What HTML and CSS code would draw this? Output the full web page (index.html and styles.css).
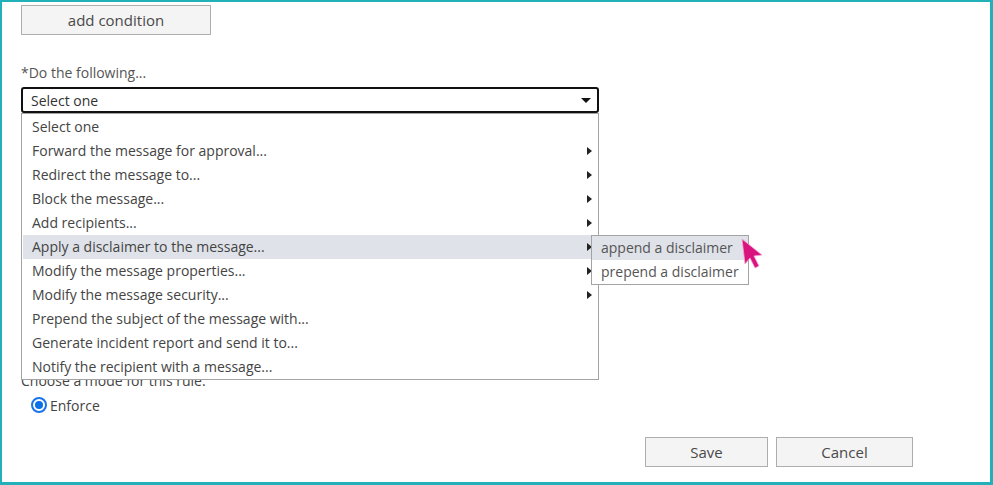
FILE: index.html
```html
<!DOCTYPE html>
<html>
<head>
<meta charset="utf-8">
<link rel="stylesheet" href="styles.css">
</head>
<body>
<div class="frame">
  <button class="btn add-btn">add condition</button>
  <div class="label">*Do the following...</div>
  <div class="select-wrap">
    <div class="select">
      <span>Select one</span>
      <span class="down"></span>
    </div>
    <ul class="list">
      <li>Select one</li>
      <li class="sub">Forward the message for approval...</li>
      <li class="sub">Redirect the message to...</li>
      <li class="sub">Block the message...</li>
      <li class="sub">Add recipients...</li>
      <li class="sub active">Apply a disclaimer to the message...
        <ul class="submenu">
          <li class="active">append a disclaimer</li>
          <li>prepend a disclaimer</li>
        </ul>
        <svg class="cursor" width="24" height="32" viewBox="0 0 24 32"><path d="M1 1 L21 17 L13 18 L18 28 L14 30 L9 20 L4 26 Z" fill="#d9147f" stroke="#f3a6cf" stroke-width="0.8"/></svg>
      </li>
      <li class="sub">Modify the message properties...</li>
      <li class="sub">Modify the message security...</li>
      <li>Prepend the subject of the message with...</li>
      <li>Generate incident report and send it to...</li>
      <li>Notify the recipient with a message...</li>
    </ul>
  </div>
  <div class="mode">Choose a mode for this rule:</div>
  <label class="radio"><span class="dot"></span>Enforce</label>
  <div class="actions">
    <button class="btn save">Save</button>
    <button class="btn cancel">Cancel</button>
  </div>
</div>
</body>
</html>
```
FILE: styles.css
```css
* { box-sizing: border-box; }
html, body { margin: 0; padding: 0; background: #fff; }
body { font-family: "Open Sans", "Liberation Sans", sans-serif; font-size: 14px; color: #444; }
.frame {
  width: 993px; height: 485px;
  border-style: solid; border-color: #22b1b9;
  border-width: 2px 3px 3px 2px;
  padding: 3px 77px 0 19px;
  position: relative;
  overflow: hidden;
}
.btn {
  font-family: inherit; font-size: 15px; color: #4a4a4a;
  background: #f4f4f4; border: 1px solid #adadad; border-radius: 0;
  padding: 0; height: 30px; display: block;
}
.add-btn { width: 190px; }
.label { margin-top: 28px; height: 20px; line-height: 20px; color: #555; }
.select-wrap { position: relative; width: 578px; margin-top: 4px; }
.select {
  height: 26px; border: 2px solid #111; border-radius: 3px;
  display: flex; align-items: center; justify-content: space-between;
  padding: 0 6px 0 8px; color: #333;
}
.down { width: 0; height: 0; border-left: 5px solid transparent; border-right: 5px solid transparent; border-top: 5px solid #111; margin-top: 1px; }
.list {
  position: absolute; left: 0; top: 100%; width: 578px;
  margin: 0; padding: 1px 0 0; list-style: none;
  border: 1px solid #a3a3a3; background: #fff; z-index: 2;
}
.list > li {
  height: 24px; line-height: 24px; padding-left: 10px; position: relative; color: #444; white-space: nowrap;
}
.list > li.sub::after {
  content: ""; position: absolute; right: 6px; top: 8px;
  border-top: 4px solid transparent; border-bottom: 4px solid transparent; border-left: 5px solid #222;
}
.list > li.active { background: #dfe2e8; margin: 0 1px; padding-left: 9px; }
.list > li.active.sub::after { right: 5px; }
.submenu {
  position: absolute; left: 568px; top: 0; width: 158px;
  margin: 0; padding: 0; list-style: none;
  border: 1px solid #a3a3a3; background: #fff; z-index: 3;
}
.submenu li { height: 24px; line-height: 24px; padding-left: 9px; color: #555; }
.submenu li.active { background: #dfe2e8; }
.cursor { position: absolute; left: 718px; top: 3px; z-index: 4; }
.mode { margin-top: 258px; height: 20px; line-height: 20px; color: #444; }
.radio { display: flex; align-items: center; margin-top: 4px; margin-left: 10px; height: 20px; color: #444; }
.dot { width: 16px; height: 16px; border-radius: 50%; border: 2px solid #1a73e8; background: #fff; position: relative; margin-right: 3px; }
.dot::after { content: ""; position: absolute; left: 2px; top: 2px; width: 8px; height: 8px; border-radius: 50%; background: #0b6fe6; }
.actions { display: flex; justify-content: flex-end; gap: 8px; margin-top: 22px; }
.save { width: 123px; }
.cancel { width: 137px; }
```
